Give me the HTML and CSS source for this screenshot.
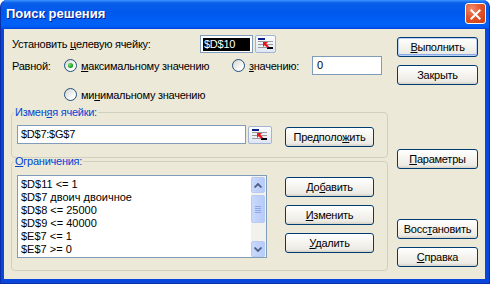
FILE: index.html
```html
<!DOCTYPE html>
<html>
<head>
    <title>Поиск решения</title>
    <meta charset="utf-8">
    <link rel="stylesheet" href="styles.css">
</head>
<body>
    <div class="window">
        <div class="titlebar">
            <span class="title">Поиск решения</span>
            <span class="close">
                <svg width="21" height="21" viewBox="0 0 21 21">
                    <path d="M6 6 L15 15 M15 6 L6 15" stroke="#fff" stroke-width="2.2" stroke-linecap="square"/>
                </svg>
            </span>
        </div>
        <div class="client">
            <div class="main">
                <div class="row row-target">
                    <span class="label-target">Установить <u>ц</u>елевую ячейку:</span>
                    <div class="field field-target"><span class="selected">$D$10</span></div>
                    <span class="refbtn">
                        <svg width="16" height="12" viewBox="0 0 16 12">
                            <rect x="0" y="0" width="7" height="2" fill="#0a1e8c"/>
                            <rect x="0" y="3" width="15" height="1" fill="#9a9a9a"/>
                            <rect x="0" y="6" width="15" height="1" fill="#9a9a9a"/>
                            <rect x="0" y="9" width="15" height="1" fill="#9a9a9a"/>
                            <rect x="9" y="9" width="6" height="2" fill="#000"/>
                            <path d="M5 4 L10 4 L8.3 5.7 L11 8.4 L9.4 10 L6.7 7.3 L5 9 Z" fill="#e8141c"/>
                        </svg>
                    </span>
                </div>
                <div class="row row-equal">
                    <span class="label-equal">Равной:</span>
                    <span class="option option-max"><span class="radio checked"></span><span><u>м</u>аксимальному значению</span></span>
                    <span class="option option-val"><span class="radio"></span><span><u>з</u>начению:</span></span>
                    <div class="field field-value">0</div>
                </div>
                <div class="row row-min">
                    <span class="option"><span class="radio"></span><span>ми<u>н</u>имальному значению</span></span>
                </div>
                <fieldset class="group group-change">
                    <legend>Измен<u>я</u>я ячейки:</legend>
                    <div class="group-body">
                        <div class="refedit">
                            <div class="field field-change">$D$7:$G$7</div>
                            <span class="refbtn refbtn-wide">
                                <svg width="16" height="12" viewBox="0 0 16 12">
                                    <rect x="0" y="0" width="7" height="2" fill="#0a1e8c"/>
                                    <rect x="0" y="3" width="15" height="1" fill="#9a9a9a"/>
                                    <rect x="0" y="6" width="15" height="1" fill="#9a9a9a"/>
                                    <rect x="0" y="9" width="15" height="1" fill="#9a9a9a"/>
                                    <rect x="9" y="9" width="6" height="2" fill="#000"/>
                                    <path d="M5 4 L10 4 L8.3 5.7 L11 8.4 L9.4 10 L6.7 7.3 L5 9 Z" fill="#e8141c"/>
                                </svg>
                            </span>
                        </div>
                        <div class="buttons">
                            <button class="btn">Предполо<u>ж</u>ить</button>
                        </div>
                    </div>
                </fieldset>
                <fieldset class="group group-limits">
                    <legend><u>О</u>граничения:</legend>
                    <div class="group-body">
                        <div class="listbox">
                            <div class="list-items">
                                <div>$D$11 &lt;= 1</div>
                                <div>$D$7 двоич двоичное</div>
                                <div>$D$8 &lt;= 25000</div>
                                <div>$D$9 &lt;= 40000</div>
                                <div>$E$7 &lt;= 1</div>
                                <div>$E$7 &gt;= 0</div>
                            </div>
                            <div class="scrollbar">
                                <span class="sb-btn">
                                    <svg width="8" height="5" viewBox="0 0 8 5"><path d="M0.5 4.5 L4 1 L7.5 4.5" fill="none" stroke="#4d6185" stroke-width="1.8"/></svg>
                                </span>
                                <span class="sb-thumb">
                                    <svg width="6" height="7" viewBox="0 0 6 7"><path d="M0 0.5 H6 M0 2.5 H6 M0 4.5 H6 M0 6.5 H6" stroke="#8fa8e8" stroke-width="1"/></svg>
                                </span>
                                <span class="sb-track"></span>
                                <span class="sb-btn">
                                    <svg width="8" height="5" viewBox="0 0 8 5"><path d="M0.5 0.5 L4 4 L7.5 0.5" fill="none" stroke="#4d6185" stroke-width="1.8"/></svg>
                                </span>
                            </div>
                        </div>
                        <div class="buttons buttons-list">
                            <button class="btn">До<u>б</u>авить</button>
                            <button class="btn"><u>И</u>зменить</button>
                            <button class="btn"><u>У</u>далить</button>
                        </div>
                    </div>
                </fieldset>
            </div>
            <div class="side">
                <button class="btn btn-default"><u>В</u>ыполнить</button>
                <button class="btn">Закрыть</button>
                <button class="btn btn-params"><u>П</u>араметры</button>
                <button class="btn btn-restore">Восс<u>т</u>ановить</button>
                <button class="btn"><u>С</u>правка</button>
            </div>
        </div>
    </div>
</body>
</html>
```

FILE: styles.css
```css
body {
    margin: 0;
    background: #fff;
    font-family: "Liberation Sans", Arial, sans-serif;
    font-size: 11px;
    letter-spacing: -0.25px;
    color: #000;
}
.window {
    width: 490px;
    height: 284px;
    box-sizing: border-box;
    display: flex;
    flex-direction: column;
    background: #0846dc;
    border: 1px solid #0a2ea8;
    border-top: none;
    border-radius: 7px 7px 0 0;
    overflow: hidden;
}
.titlebar {
    height: 29px;
    flex: none;
    display: flex;
    align-items: center;
    justify-content: space-between;
    padding: 0 4px 0 6px;
    margin: 0 -1px;
    background: linear-gradient(to bottom, #3d95ff 0%, #0a5fe8 10%, #0058ee 45%, #0062f8 85%, #0056f0 94%, #0040d4 100%);
}
.title {
    color: #fff;
    font-weight: bold;
    font-size: 13px;
    letter-spacing: 0;
    text-shadow: 1px 1px #0a1e8c;
    margin-top: -2px;
}
.close {
    width: 21px;
    height: 21px;
    box-sizing: border-box;
    margin-top: -2px;
    border: 1px solid #fff;
    border-radius: 3px;
    background: radial-gradient(circle at 30% 25%, #f38a6a 0%, #e2552c 45%, #c93c10 100%);
    display: flex;
}
.client {
    flex: 1;
    display: flex;
    margin: 0 4px 4px 3px;
    background: #ece9d8;
}
.main {
    width: 384px;
    flex: none;
}
.row {
    display: flex;
    align-items: center;
}
.row-target {
    height: 18px;
    margin-top: 6px;
    padding-left: 8px;
}
.label-target {
    width: 188px;
}
.field {
    box-sizing: border-box;
    background: #fff;
    border: 1px solid #7f9db9;
    line-height: 13px;
}
.field-target {
    width: 53px;
    height: 18px;
    padding: 2px;
}
.selected {
    display: block;
    background: #000;
    color: #fff;
    padding-left: 1px;
}
.refbtn {
    width: 21px;
    height: 18px;
    margin-left: 2px;
    box-sizing: border-box;
    border: 1px solid #a3b5d2;
    border-radius: 2px;
    background: linear-gradient(to bottom, #fbfcfe, #dfe6f3);
    display: flex;
    align-items: center;
    justify-content: center;
}
.row-equal {
    height: 19px;
    margin-top: 3px;
    padding-left: 8px;
}
.label-equal {
    width: 52px;
}
.option {
    display: flex;
    align-items: center;
    gap: 4px;
}
.option-max {
    width: 168px;
}
.option-val {
    width: 80px;
}
.field-value {
    width: 70px;
    height: 19px;
    padding: 2px 4px;
}
.row-min {
    height: 19px;
    margin-top: 10px;
    padding-left: 60px;
}
.radio {
    width: 13px;
    height: 13px;
    flex: none;
    box-sizing: border-box;
    border: 1px solid #1c5180;
    border-radius: 50%;
    background: linear-gradient(135deg, #d6d6cf, #fff 80%);
    display: flex;
    align-items: center;
    justify-content: center;
}
.radio.checked::after {
    content: "";
    width: 5px;
    height: 5px;
    border-radius: 50%;
    background: radial-gradient(circle at 35% 35%, #6ee36a, #21a121 60%, #17821a);
}
.group {
    box-sizing: border-box;
    width: 377px;
    margin: 2px 0 0 7px;
    border: 1px solid #d0d0bf;
    border-radius: 4px;
    padding: 6px 0 10px 5px;
    min-width: 0;
}
.group legend {
    color: #0046d5;
    line-height: 13px;
    padding: 0 1px;
    margin-left: -3px;
}
.group-limits {
    margin-top: -3px;
    padding-top: 7px;
    padding-bottom: 12px;
}
.group-body {
    display: flex;
    align-items: flex-start;
}
.refedit {
    width: 255px;
    display: flex;
}
.field-change {
    flex: 1;
    height: 19px;
    padding: 2px 3px;
}
.refbtn-wide {
    width: 24px;
    margin-top: 1px;
}
.buttons {
    margin: 2px 0 0 13px;
    display: flex;
    flex-direction: column;
    gap: 8px;
}
.buttons-list {
    margin-left: 18px;
}
.buttons .btn {
    width: 89px;
}
.btn {
    height: 20px;
    padding: 0;
    box-sizing: border-box;
    font-family: "Liberation Sans", Arial, sans-serif;
    font-size: 11px;
    letter-spacing: -0.25px;
    color: #000;
    border: 1px solid #003c74;
    border-radius: 3px;
    background: linear-gradient(to bottom, #ffffff 0%, #f4f3ee 50%, #ecebe6 85%, #d6d0c5 100%);
}
.btn-default {
    box-shadow: inset 0 0 0 1px #b9d1f7, inset 0 -1px 0 1px #8aaae8;
}
.listbox {
    width: 250px;
    height: 83px;
    box-sizing: border-box;
    border: 1px solid #7f9db9;
    background: #fff;
    display: flex;
}
.list-items {
    flex: 1;
    padding: 2px 3px;
    line-height: 13px;
    letter-spacing: 0;
}
.scrollbar {
    width: 15px;
    display: flex;
    flex-direction: column;
    background: #f3f1ec;
    padding: 1px 1px 0 0;
    box-sizing: border-box;
}
.sb-btn, .sb-thumb {
    box-sizing: border-box;
    border: 1px solid #b8cbf5;
    border-radius: 2px;
    background: linear-gradient(to right, #c9d8fc, #b7cbfa);
    display: flex;
    align-items: center;
    justify-content: center;
}
.sb-btn {
    height: 16px;
}
.sb-thumb {
    height: 28px;
    margin-top: 2px;
}
.sb-track {
    flex: 1;
}
.side {
    width: 81px;
    margin-left: 9px;
    display: flex;
    flex-direction: column;
    padding-top: 8px;
}
.side .btn {
    margin-top: 8px;
}
.side .btn-default {
    margin-top: 0;
}
.side .btn-params {
    margin-top: 64px;
}
.side .btn-restore {
    margin-top: 50px;
}
```
